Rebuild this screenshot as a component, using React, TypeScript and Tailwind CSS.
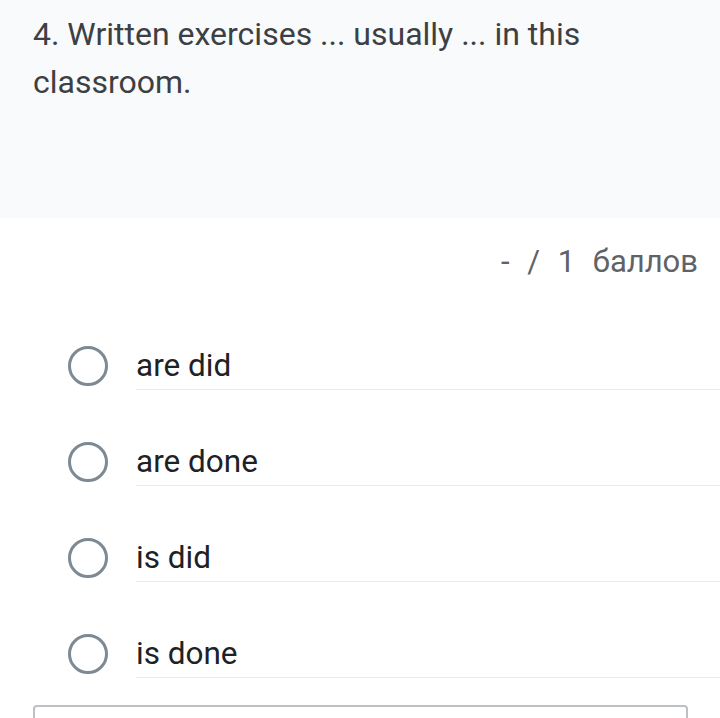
const options = ["are did", "are done", "is did", "is done"];

const App = () => {
  return (
    <div className="w-[720px] h-[718px] overflow-hidden bg-white font-['Roboto',sans-serif]">
      <div className="h-[218px] bg-[#f8fafc] pl-[33px] pr-[30px] pt-[10px]">
        <p className="text-[32px] leading-[48px] text-[#3c4043]">
          4. Written exercises ... usually ... in this classroom.
        </p>
      </div>

      <div className="flex justify-end pr-[22px] pt-[20px] h-[48px] box-content">
        <span className="text-[31px] leading-[48px] text-[#5f6368] [word-spacing:10px]">
          - / 1 баллов
        </span>
      </div>

      <div className="mt-[56px] flex flex-col gap-[48px]">
        {options.map((opt) => (
          <div key={opt} className="flex items-center h-[48px]">
            <span className="block ml-[68px] mr-[28px] w-[40px] h-[40px] shrink-0 rounded-full border-[3.5px] border-[#7d8a93]" />
            <div className="flex-1 h-[48px] flex items-center border-b border-[#e8eaed]">
              <span className="text-[31.5px] leading-[48px] text-[#202124]">{opt}</span>
            </div>
          </div>
        ))}
      </div>

      <div className="mt-[27px] ml-[33px] w-[655px] h-[40px] border-2 border-[#bdc1c6] rounded-[4px]" />
    </div>
  );
};

export default App;
